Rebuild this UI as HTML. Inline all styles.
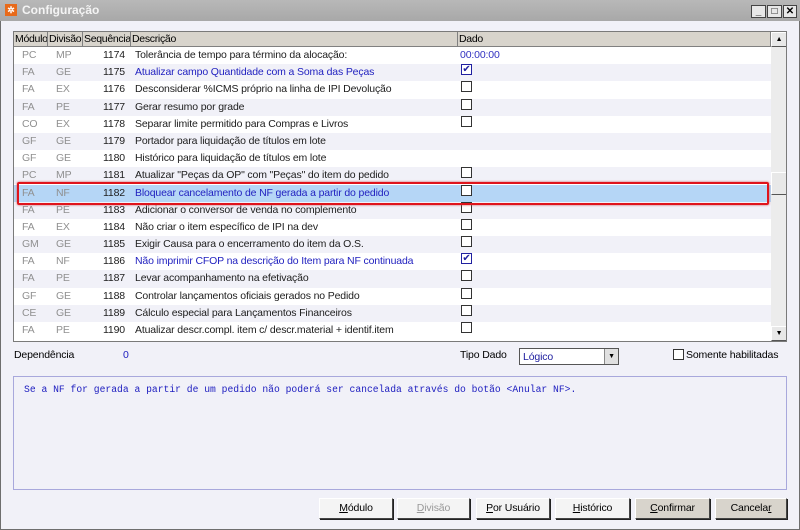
<!DOCTYPE html><html><head><meta charset="utf-8"><style>
*{box-sizing:border-box;margin:0;padding:0}
body{width:800px;height:530px;overflow:hidden;font-family:"Liberation Sans",sans-serif;font-size:10.5px;letter-spacing:-0.15px;background:#f1f1f8;position:relative}
.win{position:absolute;left:0;top:0;width:800px;height:530px;border:1px solid #6e6e6e;border-top:none}
.title{position:absolute;left:0;top:0;width:800px;height:21px;background:linear-gradient(#b8b8b8,#a8a8a8);color:#f4f4f4;font-weight:bold;font-size:12px;line-height:21px;padding-left:22px;letter-spacing:0}
.ico{position:absolute;left:5px;top:4px;width:12px;height:12px;background:#e86a1a;color:#fff;font-size:9px;line-height:12px;text-align:center}
.tb{position:absolute;top:5px;width:15px;height:13px;background:#e8e8e8;border:1px solid #444;font-size:10px;line-height:11px;text-align:center;color:#000;font-weight:bold}
.grid{position:absolute;left:13px;top:31px;width:774px;height:311px;border:1px solid #7a7a7a;background:#fff;overflow:hidden}
.hdr{position:absolute;left:0;top:0;height:15px;width:757px;background:#d8d4cc;border-bottom:1px solid #808080}
.hdr div{position:absolute;top:0;height:15px;line-height:14px;padding-left:1px;border-right:1px solid #808080;color:#000;overflow:hidden;white-space:nowrap;letter-spacing:-0.3px}
.row{position:absolute;left:0;width:757px;height:17.19px;line-height:17px}
.row span{position:absolute;top:0}
.c1{left:8px;color:#909090}.c2{left:42px;color:#909090}.c3{left:81px;width:30px;text-align:right;color:#202020}.c4{left:121px;color:#202020}
.cb{position:absolute;left:447px;top:3px;width:11px;height:11px;border:1px solid #333;background:#fff}
.blue{color:#2222c0!important}
.sb{position:absolute;left:757px;top:0;width:16px;height:309px;background:#ececec}
.btn{position:absolute;top:498px;height:21px;border:1px solid #444;border-top-color:#fff;border-left-color:#fff;box-shadow:1px 1px 0 #222;background:#f4f4f4;text-align:center;line-height:19px}
</style></head><body>
<div class="win"></div>
<div class="title"><div class="ico">✲</div>Configuração
<div class="tb" style="left:751px">_</div><div class="tb" style="left:767px">□</div><div class="tb" style="left:783px;width:14px">✕</div></div>
<div class="grid">
<div class="hdr">
<div style="left:0;width:34px">Módulo</div><div style="left:34px;width:35px">Divisão</div><div style="left:69px;width:48px">Sequência</div><div style="left:117px;width:327px">Descrição</div><div style="left:444px;width:313px">Dado</div>
</div>
<div class="row" style="top:15px;background:#fff"><span class="c1">PC</span><span class="c2">MP</span><span class="c3">1174</span><span class="c4">Tolerância de tempo para término da alocação:</span><span style="left:446px;color:#3030c0">00:00:00</span></div>
<div class="row" style="top:32.2px;background:#f1f1f8"><span class="c1">FA</span><span class="c2">GE</span><span class="c3">1175</span><span class="c4 blue">Atualizar campo Quantidade com a Soma das Peças</span><span class="cb" style="border-color:#2020a0;color:#2020a0;font-size:10px;line-height:9px;text-align:center">✔</span></div>
<div class="row" style="top:49.4px;background:#fff"><span class="c1">FA</span><span class="c2">EX</span><span class="c3">1176</span><span class="c4">Desconsiderar %ICMS próprio na linha de IPI Devolução</span><span class="cb"></span></div>
<div class="row" style="top:66.6px;background:#f1f1f8"><span class="c1">FA</span><span class="c2">PE</span><span class="c3">1177</span><span class="c4">Gerar resumo por grade</span><span class="cb"></span></div>
<div class="row" style="top:83.8px;background:#fff"><span class="c1">CO</span><span class="c2">EX</span><span class="c3">1178</span><span class="c4">Separar limite permitido para Compras e Livros</span><span class="cb"></span></div>
<div class="row" style="top:101px;background:#f1f1f8"><span class="c1">GF</span><span class="c2">GE</span><span class="c3">1179</span><span class="c4">Portador para liquidação de títulos em lote</span></div>
<div class="row" style="top:118.1px;background:#fff"><span class="c1">GF</span><span class="c2">GE</span><span class="c3">1180</span><span class="c4">Histórico para liquidação de títulos em lote</span></div>
<div class="row" style="top:135.3px;background:#f1f1f8"><span class="c1">PC</span><span class="c2">MP</span><span class="c3">1181</span><span class="c4">Atualizar "Peças da OP" com "Peças" do item do pedido</span><span class="cb"></span></div>
<div class="row" style="top:152.5px;background:#b5d6f6"><span class="c1">FA</span><span class="c2">NF</span><span class="c3">1182</span><span class="c4 blue">Bloquear cancelamento de NF gerada a partir do pedido</span><span class="cb"></span></div>
<div class="row" style="top:169.7px;background:#f1f1f8"><span class="c1">FA</span><span class="c2">PE</span><span class="c3">1183</span><span class="c4">Adicionar o conversor de venda no complemento</span><span class="cb"></span></div>
<div class="row" style="top:186.9px;background:#fff"><span class="c1">FA</span><span class="c2">EX</span><span class="c3">1184</span><span class="c4">Não criar o item específico de IPI na dev</span><span class="cb"></span></div>
<div class="row" style="top:204.1px;background:#f1f1f8"><span class="c1">GM</span><span class="c2">GE</span><span class="c3">1185</span><span class="c4">Exigir Causa para o encerramento do item da O.S.</span><span class="cb"></span></div>
<div class="row" style="top:221.3px;background:#fff"><span class="c1">FA</span><span class="c2">NF</span><span class="c3">1186</span><span class="c4 blue">Não imprimir CFOP na descrição do Item para NF continuada</span><span class="cb" style="border-color:#2020a0;color:#2020a0;font-size:10px;line-height:9px;text-align:center">✔</span></div>
<div class="row" style="top:238.4px;background:#f1f1f8"><span class="c1">FA</span><span class="c2">PE</span><span class="c3">1187</span><span class="c4">Levar acompanhamento na efetivação</span><span class="cb"></span></div>
<div class="row" style="top:255.6px;background:#fff"><span class="c1">GF</span><span class="c2">GE</span><span class="c3">1188</span><span class="c4">Controlar lançamentos oficiais gerados no Pedido</span><span class="cb"></span></div>
<div class="row" style="top:272.8px;background:#f1f1f8"><span class="c1">CE</span><span class="c2">GE</span><span class="c3">1189</span><span class="c4">Cálculo especial para Lançamentos Financeiros</span><span class="cb"></span></div>
<div class="row" style="top:290px;background:#fff"><span class="c1">FA</span><span class="c2">PE</span><span class="c3">1190</span><span class="c4">Atualizar descr.compl. item c/ descr.material + identif.item</span><span class="cb"></span></div>
<div style="position:absolute;left:3px;top:150px;width:752px;height:23px;border:2px solid #e0141c;border-radius:2px;box-shadow:0 0 2px #c55"></div>
<div class="sb">
<div style="position:absolute;left:0;top:0;width:16px;height:15px;background:#e8e8e8;border:1px solid #555;border-top-color:#fff;border-left-color:#fff;font-size:7px;text-align:center;line-height:13px">▲</div>
<div style="position:absolute;left:0;top:140px;width:16px;height:23px;background:#e8e8e8;border:1px solid #555;border-top-color:#fff;border-left-color:#fff"></div>
<div style="position:absolute;left:0;top:294px;width:16px;height:15px;background:#e8e8e8;border:1px solid #555;border-top-color:#fff;border-left-color:#fff;font-size:7px;text-align:center;line-height:13px">▼</div>
</div>
</div>
<div style="position:absolute;left:14px;top:349px">Dependência</div>
<div style="position:absolute;left:123px;top:349px;color:#2020c0">0</div>
<div style="position:absolute;left:460px;top:349px">Tipo Dado</div>
<div style="position:absolute;left:519px;top:348px;width:100px;height:17px;border:1px solid #555;background:#fff;color:#2020a0;line-height:16px;padding-left:3px">Lógico<div style="position:absolute;right:0;top:0;width:14px;height:15px;background:#e0e0e0;border-left:1px solid #888;font-size:7px;text-align:center;line-height:15px;color:#000">▼</div></div>
<div style="position:absolute;left:673px;top:349px;width:11px;height:11px;border:1px solid #333;background:#fff"></div>
<div style="position:absolute;left:686px;top:349px">Somente habilitadas</div>
<div style="position:absolute;left:13px;top:376px;width:774px;height:114px;border:1px solid #a8a8dc;background:#f1f1f8;font-family:'Liberation Mono',monospace;font-size:9.7px;letter-spacing:0;color:#2020c0;padding:7px 10px">Se a NF for gerada a partir de um pedido não poderá ser cancelada através do botão &lt;Anular NF&gt;.</div>
<div class="btn" style="left:319px;width:74px"><u>M</u>ódulo</div>
<div class="btn" style="left:397px;width:73px;color:#999"><u>D</u>ivisão</div>
<div class="btn" style="left:476px;width:74px"><u>P</u>or Usuário</div>
<div class="btn" style="left:555px;width:75px"><u>H</u>istórico</div>
<div class="btn" style="left:635px;width:75px;background:#d8d4cc"><u>C</u>onfirmar</div>
<div class="btn" style="left:715px;width:72px;background:#d8d4cc">Cancela<u>r</u></div>
</body></html>
